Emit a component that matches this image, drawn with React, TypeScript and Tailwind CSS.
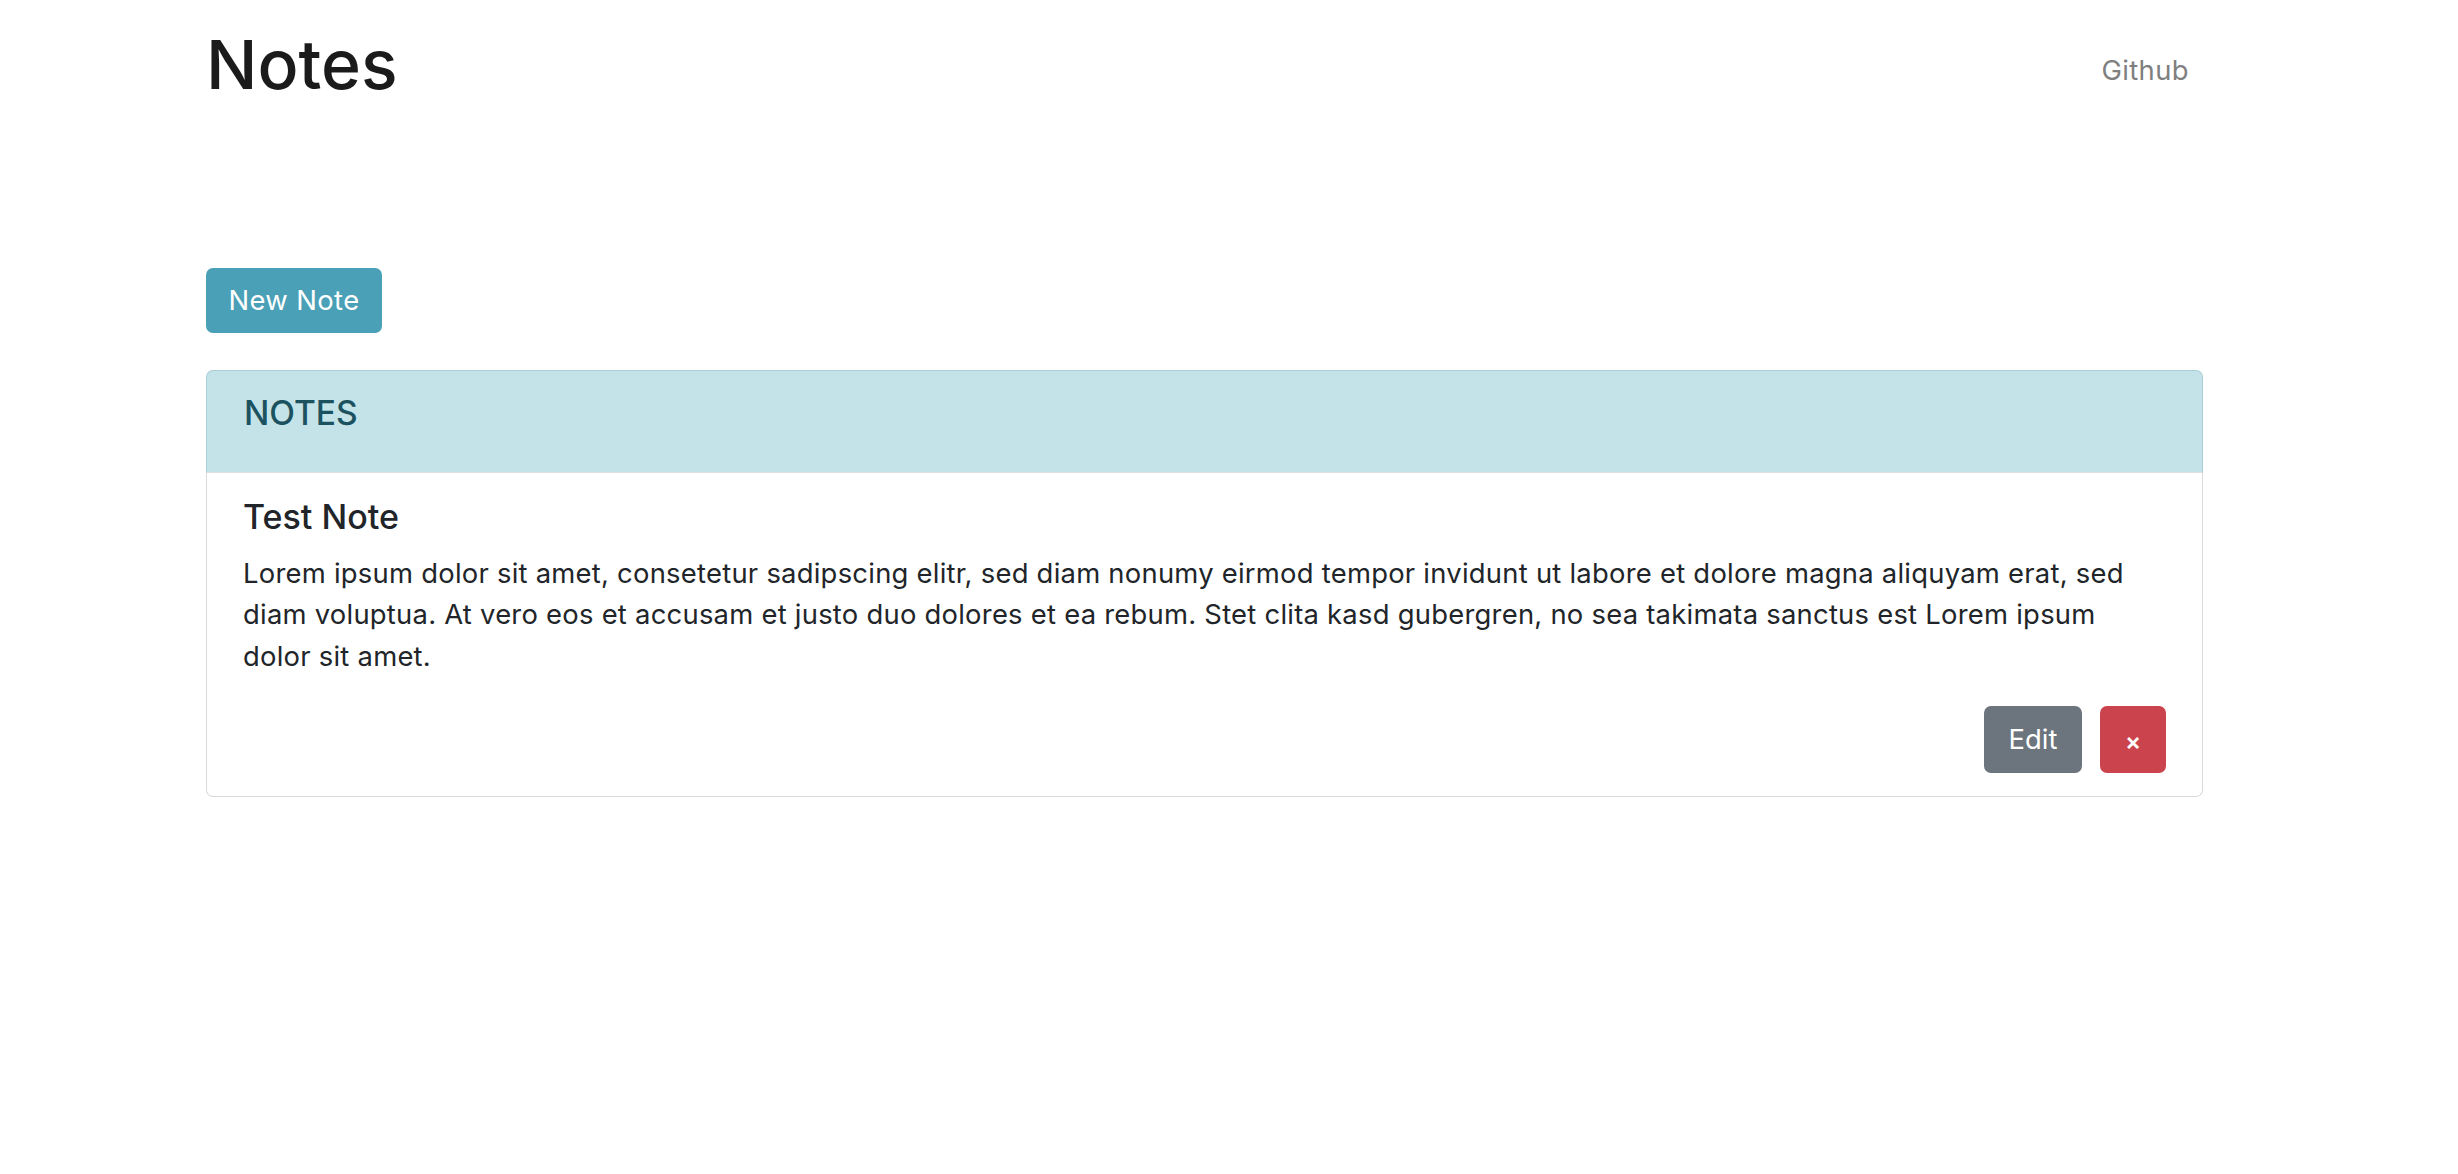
const note = {
    title: "Test Note",
    body: "Lorem ipsum dolor sit amet, consetetur sadipscing elitr, sed diam nonumy eirmod tempor invidunt ut labore et dolore magna aliquyam erat, sed diam voluptua. At vero eos et accusam et justo duo dolores et ea rebum. Stet clita kasd gubergren, no sea takimata sanctus est Lorem ipsum dolor sit amet.",
};

const App: React.FC = () => {
    return (
        <div className="min-h-screen bg-white font-['Inter','Noto_Sans',sans-serif] text-[#212529]">
            <div className="ml-[206px] w-[1997px]">
                <header className="flex items-start justify-between">
                    <h1 className="mt-[23px] text-[68px] font-medium leading-[82px] text-[#1b1b1b]">Notes</h1>
                    <a className="mt-[50px] px-[14px] text-[27.4px] leading-[41px] tracking-[0.4px] text-[#7f7f7f]">Github</a>
                </header>

                <button className="mt-[163px] h-[65px] w-[176px] rounded-[7px] bg-[#4aa0b6] text-[27.4px] tracking-[0.4px] text-white">
                    New Note
                </button>

                <section className="mt-[37px]">
                    <div className="flex h-[103px] items-start rounded-t-[7px] border-x border-t border-b border-[#abcfd6] border-b-[#e0e0e0] bg-[#c4e3e8] px-[37px] pt-[22px]">
                        <h5 className="text-[33.5px] font-medium leading-[41px] text-[#1c5260]">NOTES</h5>
                    </div>
                    <div className="rounded-b-[7px] border-x border-b border-[#dadada] px-[36px] pb-[23px] pt-[23px]">
                        <h5 className="text-[34px] font-medium leading-[41px]">{note.title}</h5>
                        <p className="mt-[16px] text-[27.4px] leading-[41.3px] tracking-[0.25px]">{note.body}</p>
                        <div className="mt-[29px] flex justify-end gap-[18px]">
                            <button className="h-[67px] w-[98px] rounded-[7px] bg-[#6c757d] text-[27.4px] text-white">Edit</button>
                            <button className="h-[67px] w-[66px] rounded-[7px] bg-[#cb444d] pt-[6px] text-[24px] font-semibold text-white">×</button>
                        </div>
                    </div>
                </section>
            </div>
        </div>
    );
};

export default App;
